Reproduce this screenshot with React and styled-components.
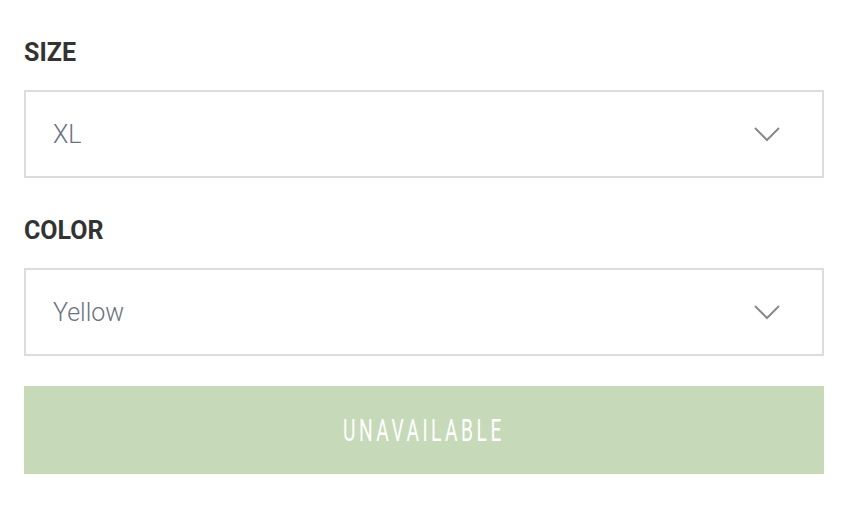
import React from "react";
import styled, { createGlobalStyle } from "styled-components";

const GlobalStyle = createGlobalStyle`
  body {
    margin: 0;
    background: #fff;
    font-family: Roboto, "Liberation Sans", sans-serif;
  }
`;

const Form = styled.div`
  width: 800px;
  padding: 40px 24px 0;
  display: flex;
  flex-direction: column;
`;

const Label = styled.div`
  font-size: 25px;
  font-weight: 700;
  color: #333;
  line-height: 26px;
  margin-bottom: 24px;
  text-transform: uppercase;
`;

const Select = styled.div`
  box-sizing: border-box;
  height: 88px;
  border: 2px solid #dcdcdc;
  display: flex;
  align-items: center;
  justify-content: space-between;
  padding: 0 42px 0 27px;
  margin-bottom: ${(p) => (p.$last ? "30px" : "40px")};
`;

const Value = styled.span`
  font-size: 25px;
  font-weight: 300;
  color: #6b7282;
`;

const Chevron = () => (
  <svg width="26" height="16" viewBox="0 0 26 16" fill="none">
    <path d="M1 2 L13 14 L25 2" stroke="#8a8a8a" strokeWidth="2" />
  </svg>
);

const Button = styled.button`
  height: 88px;
  border: none;
  background: #c6d9b8;
  color: #fff;
  font-family: Roboto, sans-serif;
  display: flex;
  align-items: center;
  justify-content: center;
  cursor: not-allowed;
  padding: 0;
`;

const ButtonText = styled.span`
  display: inline-block;
  font-size: 32px;
  font-weight: 400;
  letter-spacing: 5.8px;
  text-transform: uppercase;
  transform: scaleX(0.6);
  white-space: nowrap;
`;

const Field = ({ label, value, last }) => (
  <>
    <Label>{label}</Label>
    <Select $last={last}>
      <Value>{value}</Value>
      <Chevron />
    </Select>
  </>
);

export default function App() {
  return (
    <>
      <GlobalStyle />
      <Form>
        <Field label="Size" value="XL" />
        <Field label="Color" value="Yellow" last />
        <Button disabled>
          <ButtonText>Unavailable</ButtonText>
        </Button>
      </Form>
    </>
  );
}
